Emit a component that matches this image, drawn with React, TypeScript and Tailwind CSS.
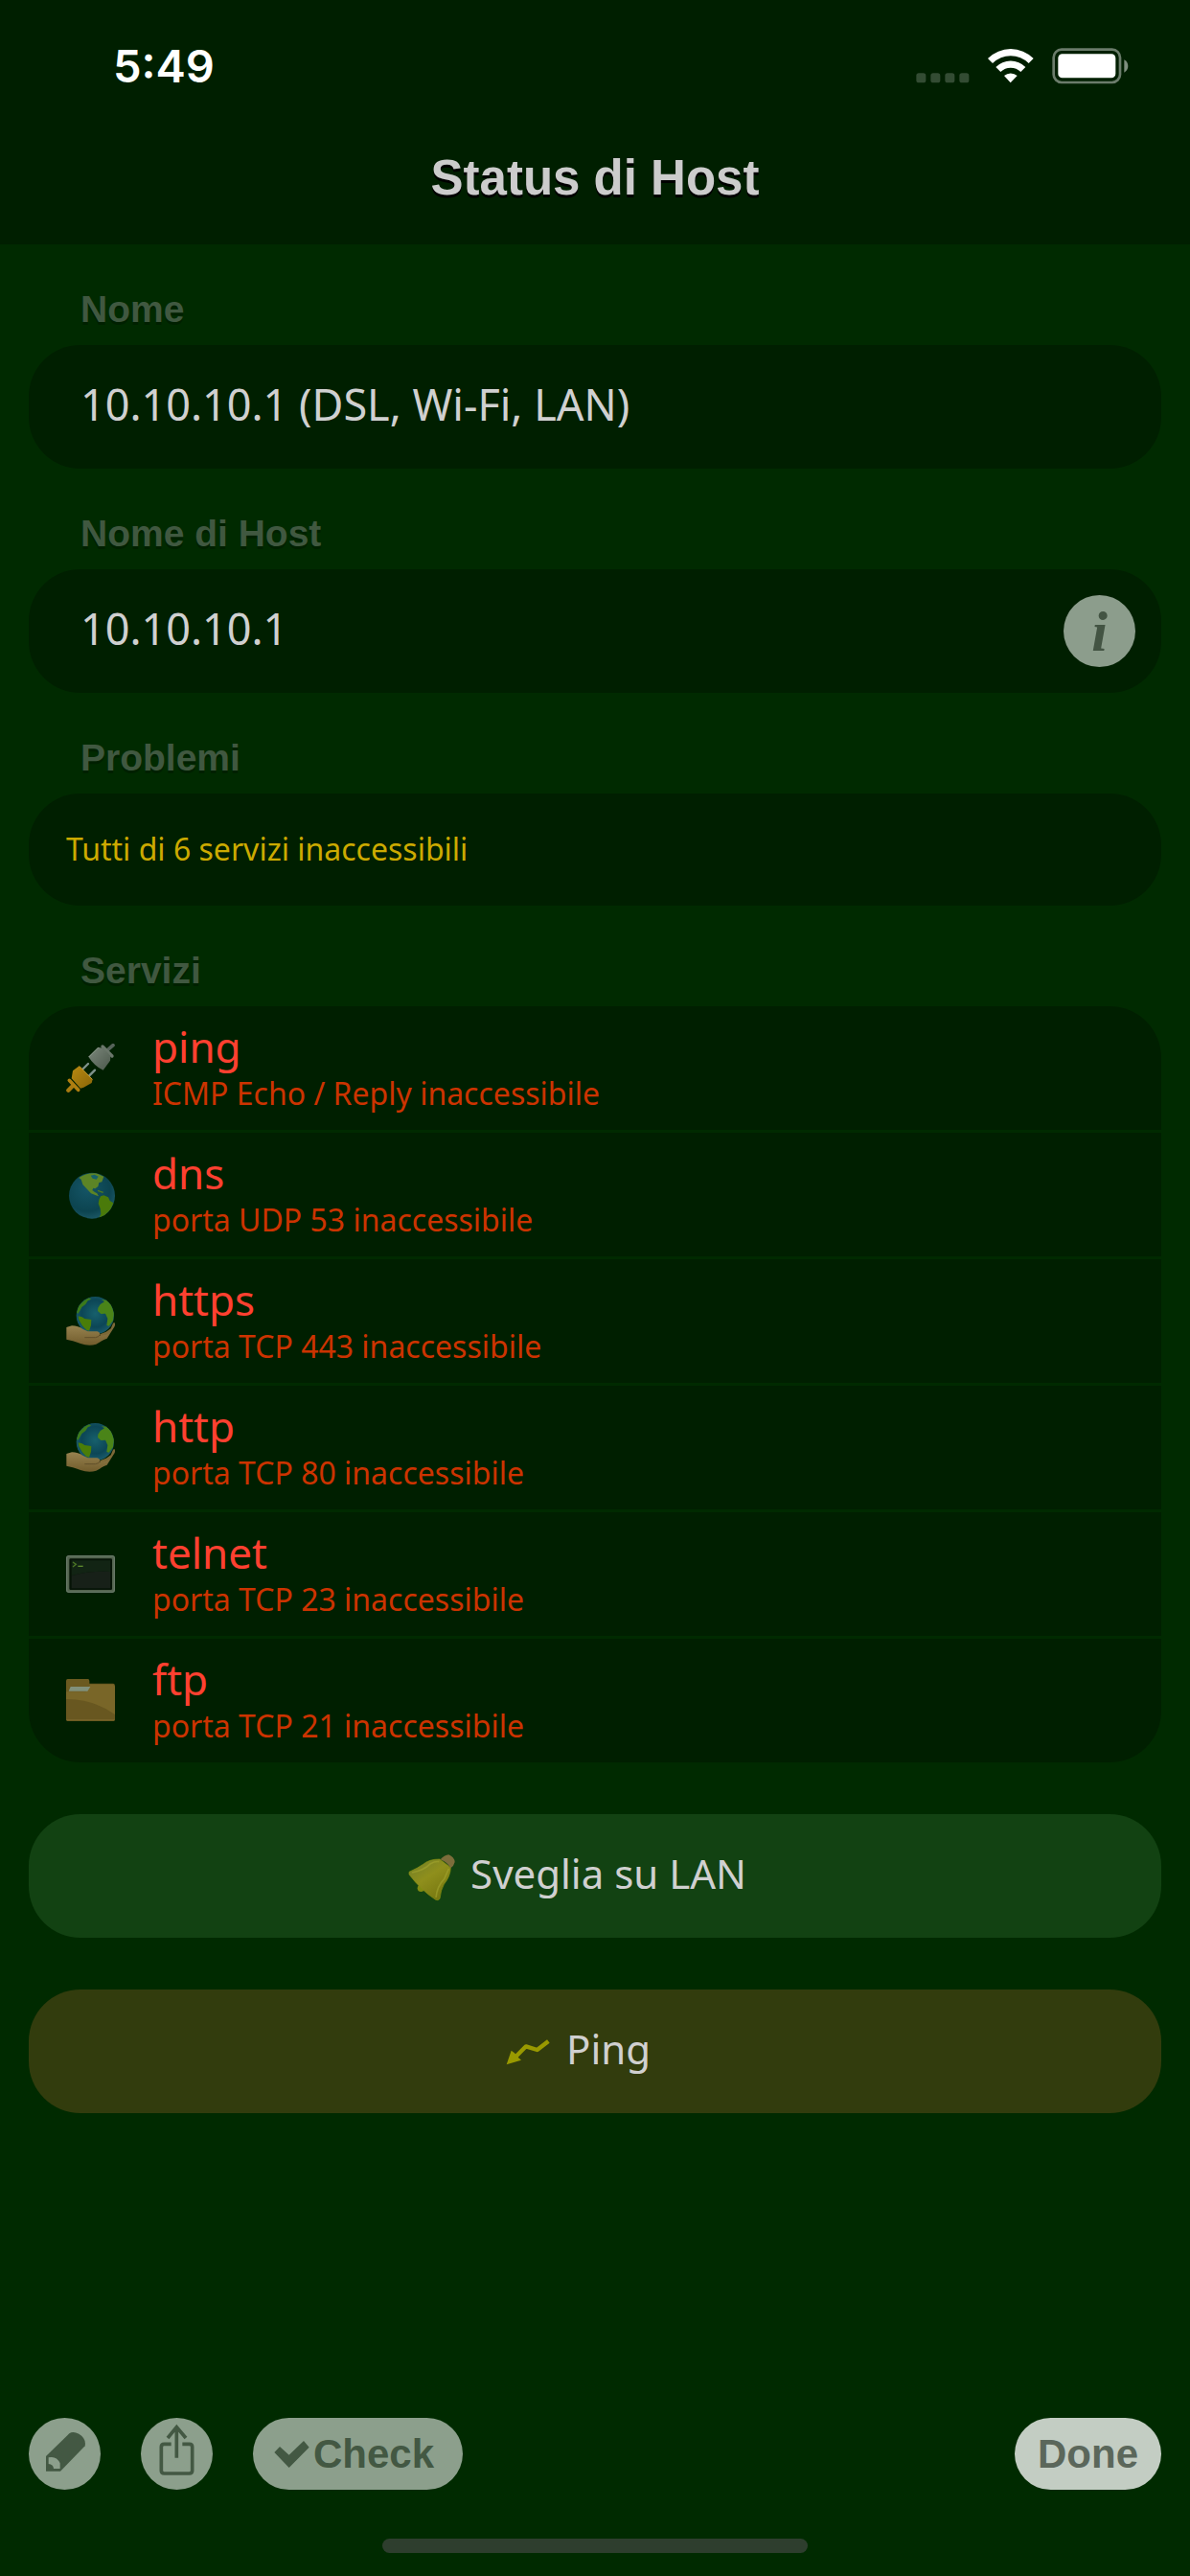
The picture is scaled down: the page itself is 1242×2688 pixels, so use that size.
import React from "react";

interface ServiceProps {
  name: string;
  detail: string;
  icon: React.ReactNode;
}

const PlugIcon = () => (
  <svg className="size-[51px] shrink-0" viewBox="87 87 153 153" aria-hidden="true">
    <defs>
      <linearGradient id="plugGrey" x1="0" y1="0" x2="1" y2="1">
        <stop offset="0" stopColor="#7c887c" />
        <stop offset="1" stopColor="#4b584b" />
      </linearGradient>
      <linearGradient id="plugGold" x1="0" y1="0" x2="1" y2="1">
        <stop offset="0" stopColor="#b98a12" />
        <stop offset="1" stopColor="#8a6608" />
      </linearGradient>
    </defs>
    <path d="M217 107 234 92" stroke="#56635a" strokeWidth="11" strokeLinecap="round" />
    <path d="M201 96 231 126" stroke="#6b776b" strokeWidth="10" strokeLinecap="round" />
    <path d="M157 128 188 98Q207 99 226 126L225 140 203 170Q176 158 157 128Z" fill="url(#plugGrey)" />
    <path d="m158 129 30-30" stroke="#93a093" strokeWidth="3" />
    <path d="m138 168 18-18m3 38 18-18" stroke="#7f938c" strokeWidth="7" strokeLinecap="round" />
    <path d="m105 222-11 11" stroke="#a87a10" strokeWidth="13" strokeLinecap="round" />
    <path d="m97 202 28 30" stroke="#b07f10" strokeWidth="11" strokeLinecap="round" />
    <path d="m128 157 42 42-3 11-25 14-10 3-28-31 4-24Z" fill="url(#plugGold)" />
    <path d="m129 158 40 41" stroke="#c49a2c" strokeWidth="3" />
  </svg>
);

const GlobeIcon = () => (
  <svg className="size-[51px] shrink-0" viewBox="87 483 153 153" aria-hidden="true">
    <defs>
      <radialGradient id="sea" cx="0.4" cy="0.35" r="0.7">
        <stop offset="0" stopColor="#145566" />
        <stop offset="0.7" stopColor="#0c4450" />
        <stop offset="1" stopColor="#1d5a68" />
      </radialGradient>
      <clipPath id="seaClip">
        <circle cx="168" cy="563" r="72" />
      </clipPath>
    </defs>
    <circle cx="168" cy="563" r="72" fill="url(#sea)" />
    <g clipPath="url(#seaClip)">
      <path
        d="M127 507Q150 490 182 493L205 503 199 520 190 522 187 534 178 541 172 539 169 546 177 552 184 556 189 565 180 562 165 556 151 541 139 528 134 512Z"
        fill="#5c8426"
      />
      <path d="M164 500 176 497 188 503 182 512 170 509Z" fill="#17616a" />
      <path d="m186 545 18 6-2 4-16-6Z" fill="#4f7a1c" />
      <path d="m195 565 10-3 14 6 5 11 11 7-8 20-15 14-13 15-11 2 8-17-2-16-6-16 2-13Z" fill="#4a7a0a" />
    </g>
  </svg>
);

const HandGlobeIcon = () => (
  <svg className="size-[51px] shrink-0" viewBox="87 99 153 153" aria-hidden="true">
    <defs>
      <radialGradient id="handSea" cx="0.5" cy="0.45" r="0.6">
        <stop offset="0" stopColor="#17606c" />
        <stop offset="0.6" stopColor="#0c4656" />
        <stop offset="1" stopColor="#1e6172" />
      </radialGradient>
      <linearGradient id="skin" x1="0" y1="0" x2="0" y2="1">
        <stop offset="0" stopColor="#97824f" />
        <stop offset="1" stopColor="#715c2c" />
      </linearGradient>
      <clipPath id="handClip">
        <circle cx="178" cy="158" r="59" />
      </clipPath>
    </defs>
    <path d="M238 180Q242 184 239 192L215 230 196 238 194 216 212 209 227 199 234 182Z" fill="#7d6938" />
    <circle cx="178" cy="158" r="59" fill="url(#handSea)" />
    <g clipPath="url(#handClip)">
      <path d="M120 148 126 128 144 111 158 103 166 107 155 112 148 123 136 132 131 142 124 153Z" fill="#3c7a1a" />
      <path d="m187 134 7-11 13-8-9-6 16 1 14 14 9 27-3 23-13 17-7-2 3-21-7-16-14 1-10-9Z" fill="#4a8418" />
      <path d="m125 160 12 3 8 5 21 3-1 18-6 17-9-3-13-14-10-17Z" fill="#4a7d08" />
    </g>
    <path
      d="M88 195 105 190Q125 190 140 201L155 208 184 208Q195 211 193 221L213 218 222 214Q207 236 181 248 158 255 132 246 106 236 88 233Z"
      fill="url(#skin)"
    />
    <path d="M145 227 179 227Q191 226 194 216" fill="none" stroke="#62502a" strokeWidth="3" />
  </svg>
);

const TerminalIcon = () => (
  <svg className="size-[51px] shrink-0" viewBox="87 111 153 153" aria-hidden="true">
    <rect x="89" y="131" width="149" height="113" rx="6" fill="#53644f" stroke="#677867" strokeWidth="4" />
    <rect x="97" y="139" width="134" height="98" rx="4" fill="#071407" />
    <path d="M104 145H225V180Q160 177 104 193Z" fill="#122414" />
    <path d="M104 193Q160 177 225 180V232H104Z" fill="#172018" />
    <path d="m108 150 10 7-10 8" fill="none" stroke="#4a7424" strokeWidth="4" />
    <path d="M124 163H140" stroke="#5d8a2e" strokeWidth="4" />
  </svg>
);

const FolderIcon = () => (
  <svg className="size-[51px] shrink-0" viewBox="87 507 153 153" aria-hidden="true">
    <path d="M92 516H155Q160 516 160 523V530H235Q240 531 240 537V641Q240 647 234 647H93Q87 647 87 641V522Q87 516 92 516Z" fill="#6b5a20" />
    <path d="M87 556H148L163 533H234L240 540V641Q240 647 234 647H93Q87 647 87 641Z" fill="#796628" />
    <path d="m95 554 6-14h62l-9 14Z" fill="#81917b" />
    <path d="M87 579Q170 578 240 627V641Q240 647 234 647H93Q87 647 87 641Z" fill="#685720" />
    <path d="M89 644H238" stroke="#79662b" strokeWidth="3" />
  </svg>
);

const BellIcon = () => (
  <svg className="size-12 shrink-0 overflow-visible" viewBox="138 192 144 144" aria-hidden="true">
    <defs>
      <linearGradient id="brass" x1="0" y1="0" x2="0.7" y2="1">
        <stop offset="0" stopColor="#6f7d2a" />
        <stop offset="0.5" stopColor="#8f8f1c" />
        <stop offset="1" stopColor="#777710" />
      </linearGradient>
    </defs>
    <circle cx="175" cy="301" r="11" fill="#808a12" />
    <path
      d="M138 250Q165 238 182 226 200 210 234 210L268 236Q268 262 247 289 237 306 234 334 229 341 221 337 176 308 138 258Z"
      fill="url(#brass)"
      stroke="#85900f"
      strokeWidth="2"
    />
    <path d="M147 252Q185 245 205 224 220 216 232 218M222 330Q226 294 248 272L262 240" fill="none" stroke="#a3a52e" strokeWidth="5" opacity="0.6" />
    <path d="M236 211Q248 197 262 196 280 204 281 219 278 232 268 238 258 220 236 211Z" fill="#7c6d3b" />
  </svg>
);

const ArrowIcon = () => (
  <svg className="size-12 shrink-0" viewBox="448 740 144 144" aria-hidden="true">
    <path d="M584 779 549 806 514 795 480 829" fill="none" stroke="#999900" strokeWidth="13" strokeLinejoin="round" />
    <path d="m453 852 15-44 10 8 12 14 9 8Z" fill="#999900" />
  </svg>
);

const StatusBar = () => (
  <div className="flex h-[138px] items-center justify-between pl-[118px] pr-16">
    <span className="font-['Inter'] text-[47px] font-semibold leading-[54px] text-white">5:49</span>
    <svg className="h-[38px] w-[222px]" viewBox="170 86 666 114" aria-hidden="true">
      <g fill="#334c33">
        <rect x="171" y="165" width="30" height="30" rx="8" />
        <rect x="216" y="165" width="30" height="30" rx="8" />
        <rect x="261" y="165" width="30" height="30" rx="8" />
        <rect x="306" y="165" width="30" height="30" rx="8" />
      </g>
      <g fill="#fff">
        <path d="M395 119A101 101 0 0 1 538 119L523 134A80 80 0 0 0 410 134Z" />
        <path d="M420 146A66 66 0 0 1 513 146L498 161A45 45 0 0 0 435 161Z" />
        <path d="M446 173A31 31 0 0 1 487 173L466 195Z" />
        <rect x="615" y="105" width="180" height="75" rx="13" />
      </g>
      <rect x="601" y="91" width="208" height="103" rx="25" fill="none" stroke="#6b7c6b" strokeWidth="8" />
      <path d="M822 123Q834 130 834 143 834 156 822 163Z" fill="#7f8f7f" />
    </svg>
  </div>
);

const Section = ({ title, children }: { title: string; children: React.ReactNode }) => (
  <section>
    <h2 className="pb-[15px] pl-[54px] pt-[46px] font-['Liberation_Sans'] text-[39px] font-bold leading-[44px] text-[#405840] [text-shadow:0_3px_0_#002000]">
      {title}
    </h2>
    <div className="overflow-hidden rounded-[54px] bg-[#001f00]">{children}</div>
  </section>
);

const Service = ({ service }: { service: ServiceProps }) => (
  <li className="box-content flex h-[129px] items-center gap-[39px] pl-[39px]">
    {service.icon}
    <div>
      <div className="text-[44px] leading-[52px] text-[#ff4030]">{service.name}</div>
      <div className="text-[32px] leading-[46px] text-[#cc3300]">{service.detail}</div>
    </div>
  </li>
);

const services: ServiceProps[] = [
  { name: "ping", detail: "ICMP Echo / Reply inaccessibile", icon: <PlugIcon /> },
  { name: "dns", detail: "porta UDP 53 inaccessibile", icon: <GlobeIcon /> },
  { name: "https", detail: "porta TCP 443 inaccessibile", icon: <HandGlobeIcon /> },
  { name: "http", detail: "porta TCP 80 inaccessibile", icon: <HandGlobeIcon /> },
  { name: "telnet", detail: "porta TCP 23 inaccessibile", icon: <TerminalIcon /> },
  { name: "ftp", detail: "porta TCP 21 inaccessibile", icon: <FolderIcon /> },
];

const App = () => {
  return (
    <div className="flex min-h-screen flex-col bg-[#002a00] font-['Noto_Sans',sans-serif] text-[#d0d0d0]">
      <header className="bg-[#001f00] pb-10">
        <StatusBar />
        <h1 className="pt-[18px] text-center font-['Liberation_Sans'] text-[51px] font-bold leading-[59px] text-[#cccccc] [text-shadow:0_3px_0_#000]">
          Status di Host
        </h1>
      </header>

      <main className="px-[30px]">
        <Section title="Nome">
          <p className="flex h-[129px] items-center pb-1.5 pl-[54px] text-[45px]">
            10.10.10.1 (DSL, Wi-Fi, LAN)
          </p>
        </Section>
        <Section title="Nome di Host">
          <div className="flex h-[129px] items-center justify-between pl-[54px] pr-[27px]">
            <p className="pb-1.5 text-[45px]">10.10.10.1</p>
            <button
              type="button"
              className="flex size-[75px] items-center justify-center rounded-full bg-[#8c9d8c] font-['Liberation_Serif'] text-[60px] font-bold italic leading-none text-[#435443]"
            >
              i
            </button>
          </div>
        </Section>
        <Section title="Problemi">
          <p className="flex h-[117px] items-center pb-0.5 pl-[39px] text-[32px] text-[#ccaa00]">
            Tutti di 6 servizi inaccessibili
          </p>
        </Section>
        <Section title="Servizi">
          <ul className="divide-y-3 divide-[#002a00]">
            {services.map((service) => (
              <Service key={service.name} service={service} />
            ))}
          </ul>
        </Section>

        <div className="flex flex-col gap-[54px] pt-[54px]">
          <button
            type="button"
            className="flex h-[129px] items-center justify-center gap-4 rounded-[54px] bg-[#124212] pr-9 text-[42px]"
          >
            <BellIcon />
            <span className="pb-1.5">Sveglia su LAN</span>
          </button>
          <button
            type="button"
            className="flex h-[129px] items-center justify-center gap-4 rounded-[54px] bg-[#323c0d] pr-9 text-[42px]"
          >
            <ArrowIcon />
            <span className="pb-1.5">Ping</span>
          </button>
        </div>
      </main>

      <footer className="mt-auto px-[30px] pb-6 pt-12">
        <div className="flex items-center gap-[42px] font-['Liberation_Sans'] text-[42px] font-bold">
          <button type="button" aria-label="Modifica" className="size-[75px] rounded-full bg-[#8c9f8c]">
            <svg viewBox="90 99 225 225" aria-hidden="true">
              <path d="M144 219 217 148Q228 139 247 149 271 164 266 187L189 266H144Z" fill="#435843" />
              <path d="M152 223Q177 217 188 241V258H168Q167 245 152 243Z" fill="#8c9f8c" />
            </svg>
          </button>
          <button type="button" aria-label="Condividi" className="size-[75px] rounded-full bg-[#8c9f8c]">
            <svg viewBox="441 99 225 225" aria-hidden="true">
              <g fill="none" stroke="#435843" strokeWidth="11">
                <path d="M536 181H514Q505 181 505 190V264Q505 273 514 273H593Q602 273 602 264V190Q602 181 593 181H571" />
                <path d="M553 224V128M525 162 553 128 582 162" />
              </g>
            </svg>
          </button>
          <button
            type="button"
            className="flex h-[75px] w-[219px] items-center gap-1 rounded-full bg-[#8c9f8c] pl-[22px] text-[#435843]"
          >
            <svg className="h-7 w-[37px]" viewBox="858 165 111 84" aria-hidden="true">
              <path d="m859 201 17-18 29 26 46-44 17 20-63 64Z" fill="#435843" />
            </svg>
            Check
          </button>
          <button type="button" className="ml-auto h-[75px] w-[153px] rounded-full bg-[#c3cdc3] text-[#5b675b]">
            Done
          </button>
        </div>
        <div className="mx-auto mt-[51px] h-[15px] w-[444px] rounded-full bg-[#2e3e2e]" />
      </footer>
    </div>
  );
};

export default App;
